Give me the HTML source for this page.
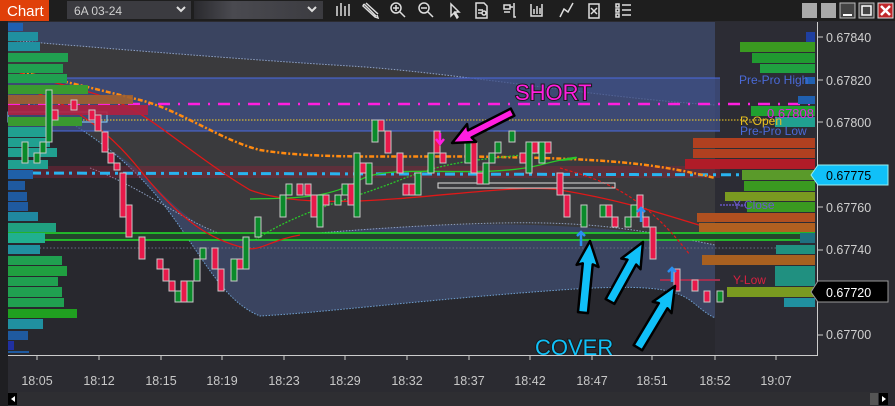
<!DOCTYPE html>
<html><head><meta charset="utf-8"><style>
html,body{margin:0;padding:0;background:#1e1e1e;width:895px;height:406px;overflow:hidden;font-family:"Liberation Sans",sans-serif}
</style></head><body>
<svg width="895" height="406" viewBox="0 0 895 406" xmlns="http://www.w3.org/2000/svg" font-family="Liberation Sans, sans-serif">
<!-- toolbar -->
<rect x="0" y="0" width="895" height="21" fill="#1e1e1e"/>
<rect x="0" y="0" width="49" height="21" fill="#e0400a"/>
<text x="7" y="16" fill="#fff" font-size="15">Chart</text>
<rect x="67" y="1" width="124" height="18" fill="#3b3b40"/>
<text x="74" y="15" fill="#cfcfcf" font-size="12">6A 03-24</text>
<path d="M177 7l4 4 4-4" stroke="#ddd" stroke-width="2" fill="none"/>
<defs><linearGradient id="g1" x1="0" x2="1"><stop offset="0" stop-color="#2a2a2e"/><stop offset="0.3" stop-color="#4a4a50"/><stop offset="1" stop-color="#3b3b40"/></linearGradient></defs>
<rect x="194" y="1" width="129" height="18" fill="url(#g1)"/>
<path d="M308 7l4 4 4-4" stroke="#ddd" stroke-width="2" fill="none"/>
<g stroke="#ddd" stroke-width="1.5" fill="none">
<path d="M337 6v10M341 3v13M345 6v10M349 4v12"/>
<path d="M364 4l12 12M366 3l12 11M364 4l-1 2 12 11 3 1-1-3"/>
<circle cx="396" cy="8" r="5"/><path d="M400 12l5 5M393 8h6M396 5v6"/>
<circle cx="424" cy="8" r="5"/><path d="M428 12l5 5M421 8h6"/>
<path d="M451 4v12l3-3 3 5 1-1-3-5h4z"/>
<path d="M476 3h8l3 3v12h-11zM478 10h5M478 13h4"/><circle cx="484" cy="13" r="2"/>
<path d="M504 5h6v4h-6zM510 7h3M514 3v14h2M504 12h6"/>
<path d="M531 4v12h11V4M534 14v-5M537 14v-8M540 14v-6"/>
<path d="M560 17l4-8 4 3 5-9"/>
<path d="M589 4h10v14h-10zM591 14l6-6M591 8l6 6"/>
<path d="M616 4h3v3h-3zM616 9h3v3h-3zM616 14h3v3h-3zM622 5h9M622 10h9M622 15h9"/>
</g>
<rect x="802" y="3" width="15" height="15" fill="#aaa"/>
<rect x="821" y="3" width="15" height="15" fill="#aaa"/>
<rect x="840" y="3" width="15" height="15" fill="#444" stroke="#bbb"/><path d="M843 15h9" stroke="#fff" stroke-width="2"/>
<rect x="859" y="3" width="15" height="15" fill="#444" stroke="#bbb"/><rect x="862" y="6" width="9" height="9" fill="none" stroke="#fff" stroke-width="1.5"/>
<rect x="878" y="3" width="15" height="15" fill="#c0282a" stroke="#ddd"/><path d="M881 6l9 9M890 6l-9 9" stroke="#fff" stroke-width="2.5"/>
<!-- chart bg -->
<rect x="0" y="21" width="895" height="385" fill="#2b2b31"/>
<rect x="0" y="21" width="8" height="385" fill="#1f1f22"/>
<rect x="8" y="22" width="809" height="333" fill="#2c2c34"/>
<rect x="8" y="22" width="707" height="333" fill="#3a4460"/>
<path d="M8 40 C100 48 250 60 350 66 S600 98 715 105 L715 245 C650 230 550 222 450 225 S280 236 245 240 C200 238 170 200 140 172 S60 125 8 105Z" fill="#3a3a3d"/>
<path d="M8 95 C60 110 120 150 160 200 S220 300 260 316 C330 312 420 300 560 290 S680 300 715 318 L715 355 L8 355Z" fill="#28282e"/>
<path d="M8 40 C100 48 250 60 350 66 S600 98 715 105" stroke="#8fa3c8" stroke-dasharray="1.5 1.5" fill="none"/>
<path d="M8 95 C60 110 120 150 160 200 S220 300 260 316 C330 312 420 300 560 290 S680 300 715 318" stroke="#6fa0d0" stroke-dasharray="1.5 1.5" fill="none"/>
<path d="M90 168 C150 190 200 235 245 240 C280 236 400 225 500 223 S650 232 715 245" stroke="#8d9fc0" stroke-dasharray="1.5 1.5" fill="none"/>
<!-- pre-pro box -->
<rect x="8" y="78" width="712" height="53" fill="#3f4f86" opacity="0.75"/>
<path d="M8 78h712M8 131h712" stroke="#4a6ae0"/>
<path d="M8 104H815" stroke="#ff1ee0" stroke-width="2.5" stroke-dasharray="12 8 2 8"/>
<path d="M8 120H800" stroke="#ffd21e" stroke-dasharray="1.5 1.5"/>
<!-- red band + cyan -->
<rect x="8" y="166" width="712" height="12" fill="#a0203a" opacity="0.35"/>
<path d="M8 173 L815 175" stroke="#28b4f0" stroke-width="3" stroke-dasharray="10 5 3 5"/>
<!-- green level -->
<rect x="45" y="233" width="770" height="7" fill="#24452c"/>
<path d="M8 233H815M8 240H815" stroke="#22e02a" stroke-width="1.5"/>
<path d="M8 248H815" stroke="#666a80" stroke-dasharray="1.5 2"/>
<path d="M720 205H815" stroke="#584a9c" stroke-width="2" stroke-dasharray="2 1"/>
<path d="M660 280H720" stroke="#a03050" stroke-width="2"/>
<!-- MAs -->
<path d="M20 72 C60 80 100 90 140 100 S220 140 260 150 C320 160 400 155 500 157 S650 162 715 178" stroke="#ff8a10" stroke-width="2.5" stroke-dasharray="5 2 2 2" fill="none"/>
<path d="M20 73 C60 85 100 92 130 108 S200 160 250 190 C330 220 500 180 560 190 S650 210 715 230" stroke="#e01818" stroke-width="1.3" fill="none"/>
<path d="M20 87 C60 100 100 120 140 170 S210 240 245 248 C260 252 270 240 300 235" stroke="#e01818" stroke-width="1.3" fill="none"/>
<path d="M560 168 C600 180 640 190 690 255" stroke="#e01818" stroke-width="1.2" stroke-dasharray="3 2" fill="none"/>
<path d="M250 199 C300 198 330 198 360 180 S480 180 540 165 S570 162 560 160" stroke="#2ac82a" stroke-width="1.3" fill="none"/>
<path d="M255 240 C300 210 350 200 400 180 S480 160 540 153" stroke="#2ac82a" stroke-width="1.3" stroke-dasharray="2 1.5" fill="none"/>
<rect x="438" y="183" width="177" height="5" fill="none" stroke="#ddd"/>
<rect x="8" y="112" width="99" height="10" fill="none" stroke="#8ad8ff"/>
<!-- left profile -->
<g>
<rect x="8" y="23" width="15" height="8" fill="#1f60b0"/>
<rect x="8" y="32" width="30" height="9" fill="#2090a0"/>
<rect x="8" y="42" width="32" height="9" fill="#2090a0"/>
<rect x="8" y="53" width="60" height="9" fill="#20a050"/>
<rect x="8" y="64" width="55" height="9" fill="#20a050"/>
<rect x="8" y="74" width="59" height="9" fill="#20a050"/>
<rect x="8" y="85" width="80" height="9" fill="#3a9a30"/>
<rect x="8" y="95" width="125" height="9" fill="#a06030" opacity="0.9"/>
<rect x="8" y="105" width="140" height="10" fill="#b02040" opacity="0.9"/>
<rect x="8" y="117" width="74" height="9" fill="#3a9a30"/>
<rect x="8" y="127" width="44" height="10" fill="#20a090"/>
<rect x="8" y="138" width="42" height="9" fill="#20a090"/>
<rect x="8" y="148" width="49" height="9" fill="#20a090"/>
<rect x="8" y="160" width="40" height="9" fill="#20a090"/>
<rect x="8" y="170" width="25" height="9" fill="#1f60a8"/>
<rect x="8" y="181" width="17" height="9" fill="#1f5aa0"/>
<rect x="8" y="192" width="19" height="9" fill="#1f5aa0"/>
<rect x="8" y="202" width="20" height="9" fill="#1f5aa0"/>
<rect x="8" y="212" width="30" height="9" fill="#2088a0"/>
<rect x="8" y="223" width="48" height="9" fill="#20a080"/>
<rect x="8" y="233" width="37" height="10" fill="#20b090"/>
<rect x="8" y="245" width="32" height="9" fill="#2090a0"/>
<rect x="8" y="256" width="54" height="9" fill="#20a050"/>
<rect x="8" y="266" width="59" height="10" fill="#20a040"/>
<rect x="8" y="277" width="50" height="9" fill="#20a050"/>
<rect x="8" y="287" width="54" height="10" fill="#20a050"/>
<rect x="8" y="298" width="56" height="9" fill="#20a050"/>
<rect x="8" y="309" width="69" height="9" fill="#20a020"/>
<rect x="8" y="319" width="35" height="10" fill="#2090a0"/>
<rect x="8" y="331" width="20" height="9" fill="#1f5aa0"/>
<rect x="8" y="341" width="6" height="9" fill="#2030a0"/>
<rect x="8" y="351" width="21" height="2" fill="#1f5aa0"/>
</g>
<!-- right profile -->
<g>
<rect x="806" y="32" width="9" height="10" fill="#1f3fa0"/>
<rect x="740" y="42" width="75" height="10" fill="#3a9a20"/>
<rect x="752" y="53" width="63" height="10" fill="#209a30"/>
<rect x="760" y="64" width="55" height="9" fill="#20a040"/>
<rect x="805" y="77" width="10" height="7" fill="#2060b0"/>
<rect x="798" y="96" width="17" height="8" fill="#2060b0"/>
<rect x="751" y="106" width="64" height="10" fill="#20a030"/>
<rect x="775" y="117" width="40" height="10" fill="#20a090"/>
<rect x="693" y="138" width="122" height="10" fill="#b04020"/>
<rect x="693" y="149" width="122" height="9" fill="#b04020"/>
<rect x="685" y="159" width="130" height="10" fill="#b01c28"/>
<rect x="742" y="170" width="73" height="10" fill="#5a9a2a"/>
<rect x="744" y="181" width="71" height="10" fill="#3a9a20"/>
<rect x="725" y="192" width="90" height="9" fill="#7a9a20"/>
<rect x="747" y="202" width="68" height="10" fill="#3a9a20"/>
<rect x="697" y="213" width="118" height="9" fill="#b05020"/>
<rect x="699" y="223" width="116" height="9" fill="#b06020"/>
<rect x="800" y="233" width="15" height="10" fill="#1f7080"/>
<rect x="776" y="245" width="39" height="9" fill="#209080"/>
<rect x="702" y="255" width="113" height="10" fill="#a86020"/>
<rect x="775" y="266" width="40" height="10" fill="#209080"/>
<rect x="775" y="276" width="40" height="10" fill="#209080"/>
<rect x="727" y="287" width="88" height="10" fill="#7a9a20"/>
<rect x="784" y="298" width="31" height="9" fill="#2090a0"/>
</g>
<!-- candles -->
<g stroke="#c8c8c8" stroke-width="1">
<g fill="#0a8a2a">
<rect x="46" y="90" width="6" height="52"/><rect x="22" y="142" width="6" height="21"/><rect x="34" y="153" width="6" height="10"/><rect x="40" y="142" width="6" height="11"/>
<rect x="175" y="291" width="6" height="11"/><rect x="187" y="281" width="6" height="21"/><rect x="194" y="259" width="6" height="22"/><rect x="200" y="248" width="6" height="11"/><rect x="231" y="259" width="6" height="22"/><rect x="243" y="237" width="6" height="32"/>
<rect x="255" y="217" width="6" height="20"/><rect x="280" y="195" width="6" height="22"/><rect x="286" y="184" width="6" height="11"/><rect x="317" y="195" width="6" height="32"/><rect x="335" y="195" width="6" height="10"/><rect x="342" y="184" width="6" height="11"/><rect x="354" y="153" width="6" height="64"/><rect x="366" y="163" width="6" height="21"/><rect x="372" y="120" width="6" height="22"/><rect x="415" y="173" width="6" height="22"/><rect x="428" y="153" width="6" height="20"/><rect x="465" y="142" width="6" height="21"/><rect x="483" y="163" width="6" height="21"/><rect x="489" y="153" width="6" height="10"/><rect x="495" y="142" width="6" height="11"/><rect x="509" y="131" width="6" height="11"/><rect x="526" y="142" width="6" height="31"/><rect x="539" y="142" width="6" height="21"/><rect x="581" y="205" width="6" height="22"/><rect x="600" y="205" width="6" height="12"/><rect x="625" y="217" width="6" height="10"/><rect x="631" y="205" width="6" height="12"/><rect x="717" y="291" width="6" height="11"/>
</g>
<g fill="#e8194a">
<rect x="52" y="110" width="6" height="10"/><rect x="71" y="100" width="6" height="10"/><rect x="89" y="110" width="6" height="10"/><rect x="95" y="115" width="6" height="16"/><rect x="102" y="132" width="6" height="20"/><rect x="108" y="153" width="6" height="10"/><rect x="114" y="163" width="6" height="7"/><rect x="120" y="173" width="6" height="44"/><rect x="126" y="205" width="6" height="32"/><rect x="139" y="237" width="6" height="22"/><rect x="157" y="259" width="6" height="10"/><rect x="163" y="269" width="6" height="12"/><rect x="169" y="281" width="6" height="10"/><rect x="181" y="281" width="6" height="21"/><rect x="212" y="248" width="6" height="21"/><rect x="218" y="269" width="6" height="22"/><rect x="237" y="259" width="6" height="10"/>
<rect x="297" y="184" width="6" height="11"/><rect x="305" y="184" width="6" height="11"/><rect x="311" y="195" width="6" height="22"/><rect x="323" y="195" width="6" height="10"/><rect x="348" y="184" width="6" height="21"/><rect x="360" y="163" width="6" height="10"/><rect x="378" y="120" width="6" height="11"/><rect x="385" y="131" width="6" height="22"/><rect x="397" y="153" width="6" height="20"/><rect x="403" y="184" width="6" height="11"/><rect x="409" y="184" width="6" height="11"/><rect x="434" y="131" width="6" height="22"/><rect x="440" y="153" width="6" height="10"/><rect x="471" y="142" width="6" height="31"/><rect x="477" y="173" width="6" height="11"/><rect x="520" y="153" width="6" height="10"/><rect x="532" y="142" width="6" height="11"/><rect x="545" y="142" width="6" height="11"/><rect x="557" y="173" width="6" height="22"/><rect x="564" y="195" width="6" height="22"/><rect x="606" y="205" width="6" height="12"/><rect x="612" y="217" width="6" height="10"/><rect x="637" y="195" width="6" height="22"/><rect x="643" y="217" width="6" height="10"/><rect x="650" y="227" width="6" height="32"/><rect x="674" y="269" width="6" height="22"/><rect x="692" y="280" width="6" height="11"/><rect x="704" y="291" width="6" height="11"/>
</g>
</g>
<!-- markers -->
<path d="M440 133v10M436 139l4 5 4-5" stroke="#ff1ee0" stroke-width="2.5" fill="none"/>
<path d="M581 246v-14M577 236l4-4 4 4M641 222v-14M637 212l4-4 4 4M672 282v-14M668 272l4-4 4 4" stroke="#2a90f0" stroke-width="2.5" fill="none"/>
<!-- annotation arrows -->
<g stroke="#000" stroke-width="2.5" stroke-linejoin="round">
<path transform="translate(452 143) rotate(-117)" d="M0 0 L10 22 L4 20 L4 68 L-4 68 L-4 20 L-10 22 Z" fill="#ff1ee0"/>
<path transform="translate(590 241) rotate(5.6)" d="M0 0 L11 25 L5 23 L5 72 L-5 72 L-5 23 L-11 25 Z" fill="#10c0f8"/>
<path transform="translate(643 242) rotate(29)" d="M0 0 L11 25 L5 23 L5 68 L-5 68 L-5 23 L-11 25 Z" fill="#10c0f8"/>
<path transform="translate(675 286) rotate(31)" d="M0 0 L11 25 L5 23 L5 72 L-5 72 L-5 23 L-11 25 Z" fill="#10c0f8"/>
</g>
<text x="515" y="100" font-size="22" fill="#ff1ee0" stroke="#1a1a1a" stroke-width="2" paint-order="stroke">SHORT</text>
<text x="535" y="355" font-size="22" fill="#10c0f8" stroke="#1a1a1a" stroke-width="2" paint-order="stroke">COVER</text>
<!-- right labels -->
<g font-size="12">
<text x="739" y="84" fill="#4a6ad8">Pre-Pro High</text>
<text x="767" y="118" fill="#e020e0" font-size="13">0.67808</text>
<text x="740" y="125" fill="#e8c020">R-Open</text>
<text x="740" y="135" fill="#4a6ad8">Pre-Pro Low</text>
<text x="733" y="209" fill="#6a5acd">Y-Close</text>
<text x="733" y="284" fill="#d82040">Y-Low</text>
</g>
<!-- price axis -->
<rect x="818" y="21" width="77" height="371" fill="#2b2b31"/>
<path d="M817.5 22V355" stroke="#ccc"/>
<g fill="#d0d0d0" font-size="12.5">
<path d="M818 37h5M818 80h5M818 122h5M818 165h5M818 207h5M818 250h5M818 292h5M818 335h5" stroke="#ccc"/>
<text x="826" y="42">0.67840</text><text x="826" y="85">0.67820</text><text x="826" y="127">0.67800</text><text x="826" y="212">0.67760</text><text x="826" y="254">0.67740</text><text x="826" y="339">0.67700</text>
</g>
<path d="M811 175 L818 165 H888 V185 H818 Z" fill="#10c0f8" stroke="#9ee"/>
<text x="826" y="180" font-size="12.5" fill="#000">0.67775</text>
<path d="M811 292 L818 281 H888 V302 H818 Z" fill="#000" stroke="#999"/>
<text x="826" y="297" font-size="12.5" fill="#fff">0.67720</text>
<!-- time axis -->
<path d="M8 355.5H818" stroke="#ccc"/>
<g stroke="#ccc"><path d="M37 355v5M99 355v5M161 355v5M222 355v5M284 355v5M345 355v5M407 355v5M469 355v5M530 355v5M592 355v5M652 355v5M715 355v5M776 355v5"/></g>
<g fill="#c8c8c8" font-size="12.5" text-anchor="middle">
<text x="37" y="385">18:05</text><text x="99" y="385">18:12</text><text x="161" y="385">18:15</text><text x="222" y="385">18:19</text><text x="284" y="385">18:23</text><text x="345" y="385">18:29</text><text x="407" y="385">18:32</text><text x="469" y="385">18:37</text><text x="530" y="385">18:42</text><text x="592" y="385">18:47</text><text x="652" y="385">18:51</text><text x="715" y="385">18:52</text><text x="776" y="385">19:07</text>
</g>
<!-- scrollbar -->
<rect x="8" y="392" width="880" height="14" fill="#2e2e32"/>
<rect x="8" y="393" width="9" height="12" fill="#000"/><path d="M15 396l-4 3 4 3z" fill="#fff"/>
<rect x="870" y="393" width="8" height="12" fill="#555"/>
<rect x="879" y="393" width="9" height="12" fill="#000"/><path d="M882 396l4 3-4 3z" fill="#fff"/>
</svg>
</body></html>
